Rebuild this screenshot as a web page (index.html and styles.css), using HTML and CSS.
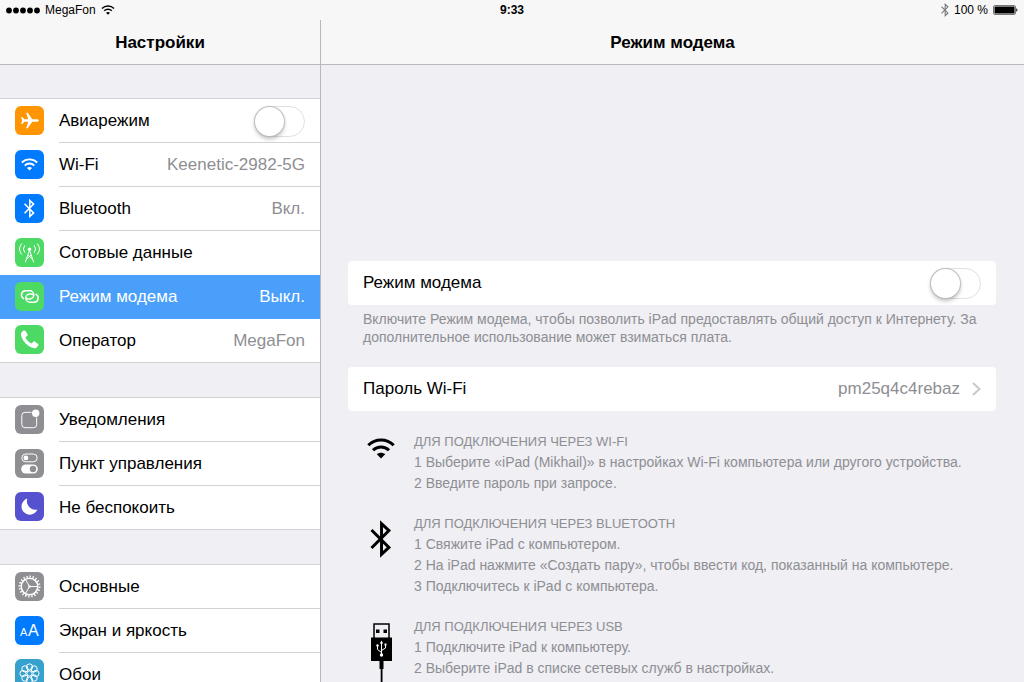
FILE: index.html
```
<!DOCTYPE html>
<html lang="ru">
<head>
    <meta charset="UTF-8">
    <meta name="viewport" content="width=device-width, initial-scale=1.0">
    <title>Настройки</title>
    <link rel="stylesheet" href="styles.css">
</head>
<body>
    <!-- Shared icon shapes -->
    <svg class="sprite" aria-hidden="true">
        <symbol id="wifi" viewBox="0 0 28 21">
            <path d="M1.3 7.2C8.3 .3 19.7 .3 26.7 7.2" fill="none" stroke="currentColor" stroke-width="3"/>
            <path d="M6 12.2C10.5 7.8 17.5 7.8 22 12.2" fill="none" stroke="currentColor" stroke-width="3"/>
            <path d="M14 20.5L9.8 16.3C12.2 14.3 15.8 14.3 18.2 16.3Z" fill="currentColor"/>
        </symbol>
        <symbol id="bluetooth" viewBox="0 0 20 36">
            <path d="M1 9.5L17.5 26L10.5 32.5V3.5L17.5 10L1 26.5" fill="none" stroke="currentColor" stroke-width="2.8"/>
        </symbol>
    </svg>

    <header class="status-bar">
        <div class="status-left">
            <svg width="34" height="7" viewBox="0 0 34 7"><circle cx="3" cy="3.5" r="2.9"/><circle cx="10" cy="3.5" r="2.9"/><circle cx="17" cy="3.5" r="2.9"/><circle cx="24" cy="3.5" r="2.9"/><circle cx="31" cy="3.5" r="2.9"/></svg>
            <span>MegaFon</span>
            <svg width="14" height="10"><use href="#wifi"/></svg>
        </div>
        <div class="status-time">9:33</div>
        <div class="status-right">
            <svg class="status-bt" width="8" height="14"><use href="#bluetooth"/></svg>
            <span>100&nbsp;%</span>
            <svg width="25" height="10" viewBox="0 0 25 10"><rect x=".5" y=".5" width="22" height="9" rx="1.5" fill="none" stroke="#777"/><rect x="1.5" y="1.5" width="20" height="7" rx=".5"/><path d="M23.3 3.200a2 2 0 0 1 0 3.6z"/></svg>
        </div>
    </header>

    <div class="split">
        <nav class="sidebar">
            <h1 class="title">Настройки</h1>
            <ul class="group">
                <li class="row">
                    <svg class="icon orange" viewBox="0 0 29 29"><path d="M23.800 14.500c0 .9-1.200 1.300-2.300 1.300h-4.200l-4.600 6.400h-1.500l2-6.400H9.300l-1.900 2.300H6.200l.9-3.600-.9-3.600h1.200l1.900 2.300h3.900l-2-6.400h1.500l4.600 6.400h4.200c1.100 0 2.300.4 2.300 1.300z"/></svg>
                    <label class="cell" for="airplane">Авиарежим</label>
                    <input class="switch" type="checkbox" id="airplane">
                </li>
                <li><a class="row" href="#">
                    <svg class="icon blue" viewBox="0 0 29 29"><use href="#wifi" x="6" y="8" width="17" height="13"/></svg>
                    <span class="cell"><span>Wi-Fi</span><span class="value">Keenetic-2982-5G</span></span>
                </a></li>
                <li><a class="row" href="#">
                    <svg class="icon blue" viewBox="0 0 29 29"><use href="#bluetooth" x="9" y="4" width="11" height="21"/></svg>
                    <span class="cell"><span>Bluetooth</span><span class="value">Вкл.</span></span>
                </a></li>
                <li><a class="row" href="#">
                    <svg class="icon green" viewBox="0 0 29 29"><g class="thin"><path d="M14.500 12L10.300 24.300M14.500 12l4.200 12.300M13 17l4.900 4.500M16 17l-4.900 4.500"/><path d="M9.800 7.300q-2.800 3.700 0 7.400M19.200 7.300q2.800 3.700 0 7.400M6.800 5.500q-4.600 5.500 0 11M22.200 5.500q4.600 5.500 0 11"/></g><circle cx="14.500" cy="11.300" r="1.700"/></svg>
                    <span class="cell"><span>Сотовые данные</span></span>
                </a></li>
                <li><a class="row selected" href="#" aria-current="page">
                    <svg class="icon green" viewBox="0 0 29 29"><g class="link-rings"><path d="M8.500 16.600A4.200 4.200 0 0 1 10.300 8.800h4.400a4.050 4.050 0 0 1 0 8.100h-1.700a2.600 2.600 0 0 1-2-1"/><path transform="rotate(180 14.800 14.500)" d="M8.500 16.600A4.200 4.200 0 0 1 10.300 8.800h4.400a4.050 4.050 0 0 1 0 8.100h-1.700a2.600 2.600 0 0 1-2-1"/></g></svg>
                    <span class="cell"><span>Режим модема</span><span class="value">Выкл.</span></span>
                </a></li>
                <li><a class="row" href="#">
                    <svg class="icon green" viewBox="0 0 29 29"><path d="M7.300 6.600l1.500-1c.7-.4 1.300-.2 1.700.5l2 3.200c.4.700.2 1.300-.4 1.700l-1.100.8c-.5.400-.4.800-.1 1.400 1 1.900 2.900 3.800 4.800 4.900.6.400 1 .4 1.400-.1l.9-1.100c.5-.6 1.100-.7 1.700-.3l3.100 2.100c.7.5.8 1.100.4 1.700l-1.100 1.500c-1.100 1.500-3.200 1.600-5.400.6-4.700-2-8.500-6.300-10.200-10.600-.8-2.200-.7-4.300.8-5.300z"/></svg>
                    <span class="cell"><span>Оператор</span><span class="value">MegaFon</span></span>
                </a></li>
            </ul>
            <ul class="group">
                <li><a class="row" href="#">
                    <svg class="icon gray" viewBox="0 0 29 29"><path class="line" d="M16.500 7.300H10a3.200 3.200 0 0 0-3.200 3.200v9A3.200 3.200 0 0 0 10 22.700h8.500a3.200 3.200 0 0 0 3.200-3.200v-7"/><circle cx="20.700" cy="8.300" r="3.700"/></svg>
                    <span class="cell"><span>Уведомления</span></span>
                </a></li>
                <li><a class="row" href="#">
                    <svg class="icon gray" viewBox="0 0 29 29"><rect class="line" x="6.800" y="5" width="15.400" height="7.800" rx="3.900"/><circle cx="10.900" cy="8.900" r="2.400"/><rect x="6.200" y="15.500" width="16.600" height="9" rx="4.500"/><circle class="hole" cx="18" cy="20" r="3.200"/></svg>
                    <span class="cell"><span>Пункт управления</span></span>
                </a></li>
                <li><a class="row" href="#">
                    <svg class="icon purple" viewBox="0 0 29 29"><path d="M12.400 6.600a8.200 8.200 0 1 0 10 10.800A8.300 8.300 0 0 1 12.400 6.600z"/></svg>
                    <span class="cell"><span>Не беспокоить</span></span>
                </a></li>
            </ul>
            <ul class="group">
                <li><a class="row" href="#">
                    <svg class="icon gray" viewBox="0 0 29 29"><circle class="teeth" cx="14.500" cy="14.500" r="10" pathLength="60"/><circle class="gear" cx="14.500" cy="14.500" r="8.300"/><path class="line" d="M14.500 14.500h8M14.500 14.500l-4-7M14.500 14.500l-4 7"/><circle cx="14.500" cy="14.500" r="1.300"/></svg>
                    <span class="cell"><span>Основные</span></span>
                </a></li>
                <li><a class="row" href="#">
                    <svg class="icon blue" viewBox="0 0 29 29"><text x="5" y="20" font-size="11">A</text><text x="13" y="20" font-size="16">A</text></svg>
                    <span class="cell"><span>Экран и яркость</span></span>
                </a></li>
                <li><a class="row" href="#">
                    <svg class="icon teal" viewBox="0 0 29 29"><g class="line"><circle cx="14.500" cy="14.500" r="2.600"/><circle cx="14.500" cy="8" r="3.100"/><circle cx="19.100" cy="9.900" r="3.100"/><circle cx="21" cy="14.500" r="3.100"/><circle cx="19.100" cy="19.100" r="3.100"/><circle cx="14.500" cy="21" r="3.100"/><circle cx="9.900" cy="19.100" r="3.100"/><circle cx="8" cy="14.500" r="3.100"/><circle cx="9.900" cy="9.900" r="3.100"/></g></svg>
                    <span class="cell"><span>Обои</span></span>
                </a></li>
            </ul>
        </nav>

        <main class="detail">
            <h2 class="title">Режим модема</h2>
            <div class="content">
                <div class="card">
                    <label for="hotspot">Режим модема</label>
                    <input class="switch" type="checkbox" id="hotspot">
                </div>
                <p class="note">Включите Режим модема, чтобы позволить iPad предоставлять общий доступ к Интернету. За дополнительное использование может взиматься плата.</p>
                <a class="card" href="#">
                    <span>Пароль Wi-Fi</span>
                    <span class="value">pm25q4c4rebaz</span>
                    <svg class="chevron" width="9" height="14" viewBox="0 0 9 14"><path d="M1 1l6.500 6L1 13"/></svg>
                </a>

                <section class="howto">
                    <svg width="28" height="21"><use href="#wifi"/></svg>
                    <div>
                        <h3>ДЛЯ ПОДКЛЮЧЕНИЯ ЧЕРЕЗ WI-FI</h3>
                        <ol>
                            <li>Выберите «iPad (Mikhail)» в настройках Wi-Fi компьютера или другого устройства.</li>
                            <li>Введите пароль при запросе.</li>
                        </ol>
                    </div>
                </section>
                <section class="howto">
                    <svg width="22" height="38"><use href="#bluetooth"/></svg>
                    <div>
                        <h3>ДЛЯ ПОДКЛЮЧЕНИЯ ЧЕРЕЗ BLUETOOTH</h3>
                        <ol>
                            <li>Свяжите iPad с компьютером.</li>
                            <li>На iPad нажмите «Создать пару», чтобы ввести код, показанный на компьютере.</li>
                            <li>Подключитесь к iPad с компьютера.</li>
                        </ol>
                    </div>
                </section>
                <section class="howto">
                    <svg width="21" height="66" viewBox="0 0 21 66"><path d="M3 15V1h15v14" fill="none" stroke="#000" stroke-width="1.500"/><path d="M5 6.500h3.500V10H5zM12.500 6.500H16V10h-3.500zM0 14.500h21V38H0zM8.500 38h4v8h-4zM9.700 46h1.800v20H9.700z"/><g fill="none" stroke="#fff"><path d="M10.500 20v12M10.500 29.500L6.500 26.500V23M10.500 27.500l4-2.500v-3"/></g><path d="M10.500 17.500l-1.700 3h3.400zM13.500 20.500h2v2h-2z" fill="#fff"/><circle cx="6.500" cy="22.500" r="1.200" fill="#fff"/><circle cx="10.500" cy="32" r="1.700" fill="#fff"/></svg>
                    <div>
                        <h3>ДЛЯ ПОДКЛЮЧЕНИЯ ЧЕРЕЗ USB</h3>
                        <ol>
                            <li>Подключите iPad к компьютеру.</li>
                            <li>Выберите iPad в списке сетевых служб в настройках.</li>
                        </ol>
                    </div>
                </section>
            </div>
        </main>
    </div>
</body>
</html>
```
FILE: styles.css
```
* {
    box-sizing: border-box;
}
body {
    display: flex;
    flex-direction: column;
    height: 100vh;
    margin: 0;
    overflow: hidden;
    font-family: "Liberation Sans", Arial, sans-serif;
    font-size: 17px;
    color: #000;
    background-color: #efeff4;
}
h1, h2, h3, p, ul, ol {
    margin: 0;
    padding: 0;
}
ul, ol {
    list-style: none;
}
a {
    color: inherit;
    text-decoration: none;
}
.sprite {
    display: none;
}

/* Status bar */
.status-bar {
    display: grid;
    grid-template-columns: 1fr auto 1fr;
    align-items: center;
    height: 20px;
    padding: 0 6px;
    font-size: 12px;
    background-color: #f7f7f7;
}
.status-left, .status-right {
    display: flex;
    align-items: center;
    gap: 5px;
}
.status-right {
    justify-content: flex-end;
}
.status-time {
    font-weight: bold;
}
.status-bt {
    color: #777;
}

/* Two panes */
.split {
    display: grid;
    grid-template-columns: 5fr 11fr;
    flex: 1;
    min-height: 0;
}
.sidebar, .detail {
    overflow: hidden;
}
.detail {
    border-left: 1px solid #b8b8bc;
}
.title {
    height: 45px;
    border-bottom: 1px solid #b8b8bf;
    font-size: 17px;
    line-height: 45px;
    text-align: center;
    background-color: #f7f7f7;
}

/* Settings list */
.group {
    margin: 33px 0 34px;
    border-top: 1px solid #d2d2d6;
    background-color: #fff;
}
.group + .group {
    margin-top: 0;
}
.row {
    display: flex;
    align-items: center;
    height: 44px;
    padding-left: 15px;
}
.cell {
    display: flex;
    flex: 1;
    align-items: center;
    justify-content: space-between;
    height: 44px;
    margin-left: 15px;
    padding-right: 15px;
    border-bottom: 1px solid #d2d2d6;
}
.row .switch {
    margin-right: 15px;
}
.row:has(.switch) {
    background: linear-gradient(#d2d2d6, #d2d2d6) right bottom / calc(100% - 59px) 1px no-repeat;
}
.value {
    color: #8e8e93;
}
.selected, .selected .value {
    color: #fff;
}
.selected {
    background-color: #4a9ffb;
}
.selected .cell,
li:has(+ li .selected) .cell {
    border-color: transparent;
}
.group li:last-child .row {
    border-bottom: 1px solid #d2d2d6;
}
.group li:last-child .cell {
    border-bottom: none;
}

/* Icons */
.icon {
    flex: none;
    width: 29px;
    height: 29px;
    margin-bottom: 2px;
    border-radius: 6px;
    color: #fff;
    fill: #fff;
}
.orange { background-color: #ff9500; }
.blue { background-color: #007aff; }
.green { background-color: #4cd964; }
.gray { background-color: #8e8e93; }
.purple { background-color: #5551cf; }
.teal { background-color: #35a1cc; }
.thin, .line, .gear, .teeth, .link-rings {
    fill: none;
    stroke: #fff;
}
.thin {
    stroke-width: 1px;
}
.gear, .link-rings {
    stroke-width: 1.5px;
    stroke-linecap: round;
}
.teeth {
    stroke-width: 2px;
    stroke-dasharray: 1.3 1.7;
}
.hole {
    fill: #8e8e93;
}

/* Toggle */
.switch {
    appearance: none;
    flex: none;
    width: 51px;
    height: 31px;
    margin: 0;
    border: 1px solid #e0e0e0;
    border-radius: 16px;
    background-color: #fff;
}
.switch::before {
    content: "";
    display: block;
    width: 29px;
    height: 29px;
    border-radius: 50%;
    background-color: #fff;
    box-shadow: 0 0 1px 1px #bbb, 0 3px 4px rgba(0, 0, 0, 0.25);
}
.switch:checked {
    background-color: #4cd964;
}
.switch:checked::before {
    margin-left: auto;
}

/* Detail pane */
.content {
    padding: 196px 28px 0 27px;
}
.card {
    display: flex;
    align-items: center;
    height: 44px;
    padding: 0 15px;
    border-radius: 4px;
    background-color: #fff;
}
.card :first-child {
    flex: 1;
}
.chevron {
    margin-left: 12px;
    fill: none;
    stroke: #c7c7cc;
    stroke-width: 2px;
}
.note {
    margin-bottom: 21px;
    padding: 5px 0 0 15px;
    font-size: 14px;
    line-height: 18px;
    color: #8e8e93;
}
.howto {
    display: grid;
    grid-template-columns: 36px 1fr;
    gap: 15px;
    margin-top: 19px;
    padding-left: 15px;
    font-size: 14px;
    line-height: 21px;
    color: #8e8e93;
}
.card + .howto {
    margin-top: 20px;
}
.howto > svg {
    justify-self: center;
    margin-top: 7px;
    color: #000;
}
.howto h3 {
    font-size: 13px;
    font-weight: normal;
}
.howto ol {
    counter-reset: step;
}
.howto li::before {
    counter-increment: step;
    content: counter(step) " ";
}
```
